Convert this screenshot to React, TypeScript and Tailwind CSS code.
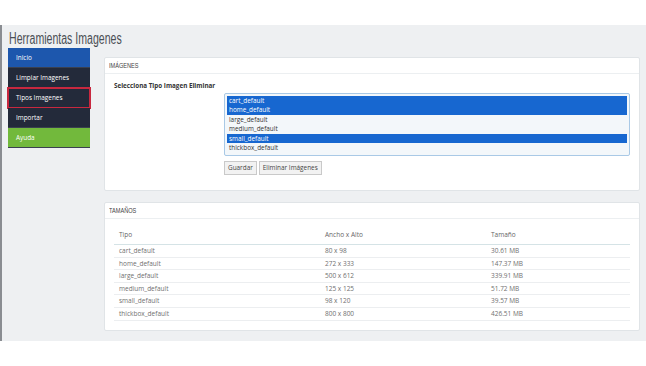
import React from "react";

const menu = [
  { label: "Inicio", cls: "bg-[#1d57ad]" },
  { label: "Limpiar Imagenes", cls: "bg-[#232a3a]" },
  { label: "Tipos Imagenes", cls: "bg-[#232a3a] outline outline-2 -outline-offset-1 outline-[#c8283f]" },
  { label: "Importar", cls: "bg-[#232a3a]" },
  { label: "Ayuda", cls: "bg-[#72b93c]" },
];

const opts = [
  { n: "cart_default", s: true },
  { n: "home_default", s: true },
  { n: "large_default", s: false },
  { n: "medium_default", s: false },
  { n: "small_default", s: true },
  { n: "thickbox_default", s: false },
];

const rows = [
  ["cart_default", "80 x 98", "30.61 MB"],
  ["home_default", "272 x 333", "147.37 MB"],
  ["large_default", "500 x 612", "339.91 MB"],
  ["medium_default", "125 x 125", "51.72 MB"],
  ["small_default", "98 x 120", "39.57 MB"],
  ["thickbox_default", "800 x 800", "426.51 MB"],
];

const narrow = { fontFamily: '"Liberation Sans", Arial, sans-serif' };

function PanelHeading({ text }: { text: string }) {
  return (
    <div className="h-[16px] border-b border-[#eceff1] pl-[4px] flex items-center">
      <span className="block origin-left scale-x-[0.8] whitespace-nowrap text-[7px] leading-[8px] text-[#444]" style={narrow}>
        {text}
      </span>
    </div>
  );
}

export default function App() {
  return (
    <div className="w-[646px] h-[366px] bg-white overflow-hidden" style={{ fontFamily: '"Open Sans", sans-serif' }}>
      <div className="h-[25px]" />
      <div className="h-[316px] bg-[#eef0f2] border-l-2 border-[#8a8d92] flex flex-col">
        <div className="pl-[7px] h-[23px] pt-[5px] flex items-start">
          <span
            className="block origin-left scale-x-[0.66] whitespace-nowrap text-[16px] leading-[18px] text-[#4b4f55]"
            style={narrow}
          >
            Herramientas Imagenes
          </span>
        </div>
        <div className="flex flex-1">
          <div className="w-[82px] ml-[6px] flex flex-col">
            {menu.map((m) => (
              <div
                key={m.label}
                className={`h-[20px] pl-[8px] text-[6.4px] leading-[20px] text-white border-b border-[#3a4150] ${m.cls}`}
              >
                {m.label}
              </div>
            ))}
          </div>
          <div className="ml-[14px] w-[536px] flex flex-col">
            <div className="mt-[9px] h-[134px] bg-white border border-[#e0e4e7] rounded-[2px]">
              <PanelHeading text="IMÁGENES" />
              <div className="pl-[9px] pt-[7px] text-[6.3px] font-bold text-[#333] leading-[10px]">
                Selecciona Tipo Imagen Eliminar
              </div>
              <div className="ml-[119px] mt-[2px] w-[406px] h-[63px] border border-[#a9c9e6] bg-[#f3f7fa] pt-[2px] px-[2px] rounded-[2px]">
                {opts.map((o) => (
                  <div
                    key={o.n}
                    className={`h-[9.4px] leading-[9.4px] text-[6.4px] pl-[2px] ${o.s ? "bg-[#1767d0] text-white" : "text-[#333]"}`}
                  >
                    {o.n}
                  </div>
                ))}
              </div>
              <div className="ml-[119px] mt-[5px] flex gap-[2px]">
                <div className="h-[14px] px-[3px] border border-[#c9c9c9] bg-[#f2f2f2] text-[6.4px] leading-[12px] text-[#444]">
                  Guardar
                </div>
                <div className="h-[14px] px-[3px] border border-[#c9c9c9] bg-[#f2f2f2] text-[6.4px] leading-[12px] text-[#444]">
                  Eliminar Imágenes
                </div>
              </div>
            </div>
            <div className="mt-[11px] h-[129px] bg-white border border-[#e0e4e7] rounded-[2px]">
              <PanelHeading text="TAMAÑOS" />
              <div className="mx-[9px] mt-[9px]">
                <div className="grid grid-cols-[206px_166px_1fr] h-[17px] border-b border-[#d5e3e6] text-[6.5px] leading-[14px] text-[#666] pl-[5px]">
                  <div>Tipo</div>
                  <div>Ancho x Alto</div>
                  <div>Tamaño</div>
                </div>
                {rows.map((r) => (
                  <div
                    key={r[0]}
                    className="grid grid-cols-[206px_166px_1fr] h-[12.6px] border-b border-[#eceef0] text-[6.5px] leading-[12px] text-[#707070] pl-[5px]"
                  >
                    <div>{r[0]}</div>
                    <div>{r[1]}</div>
                    <div>{r[2]}</div>
                  </div>
                ))}
              </div>
            </div>
          </div>
        </div>
      </div>
    </div>
  );
}
